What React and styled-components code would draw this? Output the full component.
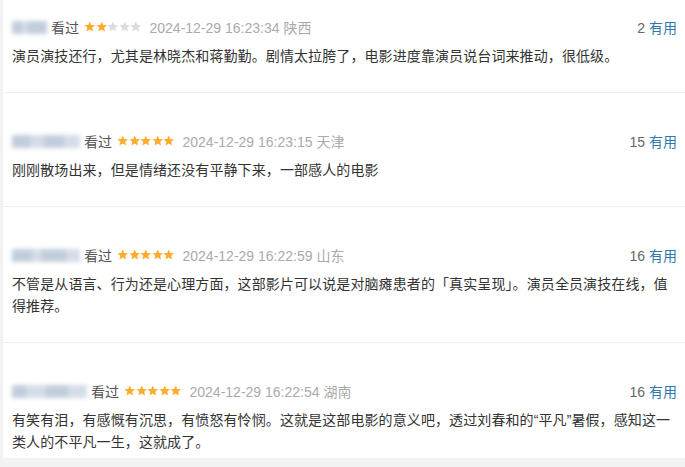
import React from 'react';
import styled, { createGlobalStyle } from 'styled-components';

const GlobalStyle = createGlobalStyle`
  html, body {
    margin: 0;
    padding: 0;
    background: #f2f2f2;
    overflow: hidden;
  }
  body {
    font-family: 'Liberation Sans', Arial, 'Noto Sans CJK SC', sans-serif;
  }
`;

const comments = [
  {
    name: [10, 6, 19],
    rating: 2,
    time: '2024-12-29 16:23:34',
    region: '陕西',
    votes: 2,
    text: '演员演技还行，尤其是林晓杰和蒋勤勤。剧情太拉胯了，电影进度靠演员说台词来推动，很低级。',
  },
  {
    name: [18, 14, 20, 16],
    rating: 5,
    time: '2024-12-29 16:23:15',
    region: '天津',
    votes: 15,
    text: '刚刚散场出来，但是情绪还没有平静下来，一部感人的电影',
  },
  {
    name: [20, 10, 24, 14],
    rating: 5,
    time: '2024-12-29 16:22:59',
    region: '山东',
    votes: 16,
    text: '不管是从语言、行为还是心理方面，这部影片可以说是对脑瘫患者的「真实呈现」。演员全员演技在线，值得推荐。',
  },
  {
    name: [14, 20, 22, 19],
    rating: 5,
    time: '2024-12-29 16:22:54',
    region: '湖南',
    votes: 16,
    text: '有笑有泪，有感慨有沉思，有愤怒有怜悯。这就是这部电影的意义吧，透过刘春和的“平凡”暑假，感知这一类人的不平凡一生，这就成了。',
  },
];

function Star({ on }) {
  return (
    <svg width="11.5" height="11.5" viewBox="0 0 24 24">
      <path
        fill={on ? '#ffac2d' : '#dcdcdc'}
        d="M12 1l3.2 7.2 7.8.7-5.9 5.2 1.8 7.7L12 17.8l-6.9 4 1.8-7.7L1 8.9l7.8-.7z"
      />
    </svg>
  );
}

export default function App() {
  return (
    <>
      <GlobalStyle />
      <List>
        {comments.map((c, i) => (
          <Item key={i}>
            <Header>
              <Meta>
                <BlurName>
                  {c.name.map((w, j) => (
                    <Chunk key={j} style={{ width: w }} shade={j % 2} />
                  ))}
                </BlurName>
                <Seen>看过</Seen>
                <Stars>
                  {[1, 2, 3, 4, 5].map(n => (
                    <Star key={n} on={n <= c.rating} />
                  ))}
                </Stars>
                <Time>
                  {c.time} {c.region}
                </Time>
              </Meta>
              <Votes>
                {c.votes} <Useful>有用</Useful>
              </Votes>
            </Header>
            <Content>{c.text}</Content>
          </Item>
        ))}
      </List>
    </>
  );
}

const List = styled.div`
  margin: -21px 0 0 3px;
  background: #fff;
`;

const Item = styled.div`
  padding: 38px 8px 25px 9px;
  border-bottom: 1px solid #efefef;

  &:last-child {
    padding-bottom: 5px;
    border-bottom: none;
  }
`;

const Header = styled.div`
  display: flex;
  align-items: center;
  justify-content: space-between;
  height: 20px;
  margin-bottom: 8px;
  font-size: 14px;
`;

const Meta = styled.div`
  display: flex;
  align-items: center;
`;

const BlurName = styled.div`
  display: flex;
  align-items: center;
  height: 14px;
  margin-right: 4px;
  filter: blur(2px);
  opacity: 0.85;
`;

const Chunk = styled.span`
  display: block;
  height: 13px;
  background: ${p => (p.shade ? '#cdd7e3' : '#b6c5d6')};
`;

const Seen = styled.span`
  color: #555;
  margin-right: 5px;
`;

const Stars = styled.span`
  display: flex;
  margin-right: 8px;
`;

const Time = styled.span`
  color: #aaa;
`;

const Votes = styled.span`
  color: #666;
`;

const Useful = styled.span`
  color: #3377aa;
`;

const Content = styled.div`
  font-size: 14px;
  line-height: 22px;
  letter-spacing: 0.1px;
  color: #333;
`;
